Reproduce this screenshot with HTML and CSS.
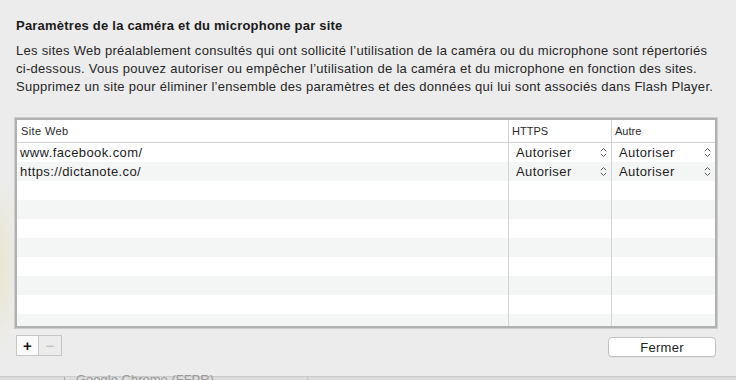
FILE: index.html
```html
<!DOCTYPE html>
<html lang="fr">
<head>
<meta charset="utf-8"/>
<title>Paramètres de la caméra et du microphone par site</title>
<link rel="stylesheet" href="styles.css">
</head>
<body>
<div class="sheet">
  <h1 class="title">Paramètres de la caméra et du microphone par site</h1>
  <p class="intro">Les sites Web préalablement consultés qui ont sollicité l’utilisation de la caméra ou du microphone sont répertoriés ci-dessous. Vous pouvez autoriser ou empêcher l’utilisation de la caméra et du microphone en fonction des sites. Supprimez un site pour éliminer l’ensemble des paramètres et des données qui lui sont associés dans Flash Player.</p>

  <div class="sites">
    <div class="row head">
      <div class="cell">Site Web</div>
      <div class="cell">HTTPS</div>
      <div class="cell">Autre</div>
    </div>
    <div class="row">
      <div class="cell">www.facebook.com/</div>
      <div class="cell pick">Autoriser <svg class="updown" width="7" height="11" viewBox="0 0 7 11"><path d="M0.8 4.2 L3.5 1.5 L6.2 4.2 M0.8 6.8 L3.5 9.5 L6.2 6.8"/></svg></div>
      <div class="cell pick">Autoriser <svg class="updown" width="7" height="11" viewBox="0 0 7 11"><path d="M0.8 4.2 L3.5 1.5 L6.2 4.2 M0.8 6.8 L3.5 9.5 L6.2 6.8"/></svg></div>
    </div>
    <div class="row">
      <div class="cell">https://dictanote.co/</div>
      <div class="cell pick">Autoriser <svg class="updown" width="7" height="11" viewBox="0 0 7 11"><path d="M0.8 4.2 L3.5 1.5 L6.2 4.2 M0.8 6.8 L3.5 9.5 L6.2 6.8"/></svg></div>
      <div class="cell pick">Autoriser <svg class="updown" width="7" height="11" viewBox="0 0 7 11"><path d="M0.8 4.2 L3.5 1.5 L6.2 4.2 M0.8 6.8 L3.5 9.5 L6.2 6.8"/></svg></div>
    </div>
    <div class="row"><div class="cell"></div><div class="cell"></div><div class="cell"></div></div>
    <div class="row"><div class="cell"></div><div class="cell"></div><div class="cell"></div></div>
    <div class="row"><div class="cell"></div><div class="cell"></div><div class="cell"></div></div>
    <div class="row"><div class="cell"></div><div class="cell"></div><div class="cell"></div></div>
    <div class="row"><div class="cell"></div><div class="cell"></div><div class="cell"></div></div>
    <div class="row"><div class="cell"></div><div class="cell"></div><div class="cell"></div></div>
    <div class="row"><div class="cell"></div><div class="cell"></div><div class="cell"></div></div>
    <div class="row"><div class="cell"></div><div class="cell"></div><div class="cell"></div></div>
  </div>

  <div class="actions">
    <div class="segment">
      <button class="seg add">+</button>
      <button class="seg remove" disabled>−</button>
    </div>
    <button class="close">Fermer</button>
  </div>
</div>

<div class="behind">
  <span class="behind-label">Google Chrome (FFPR)</span>
</div>
</body>
</html>
```

FILE: styles.css
```css
html, body { margin: 0; }
body {
  width: 736px; height: 380px; overflow: hidden; position: relative;
  font-family: "Liberation Sans", Arial, sans-serif; font-size: 13px; color: #1d1d1d;
  background: radial-gradient(ellipse 22px 90px at 0 265px, #e9e6cf, rgba(236,236,236,0) 100%), #ececec;
}
.sheet { padding: 17px 20px 0 16px; }
.title { margin: 0; font-size: 13px; line-height: 18px; font-weight: bold; color: #1a1a1a; letter-spacing: 0.22px; }
.intro { margin: 7px 0 0; line-height: 18px; color: #262626; letter-spacing: 0.28px; }

.sites {
  margin: 22px 0 0 -1px; width: 702px; height: 210px; box-sizing: border-box; overflow: hidden;
  border: 2px solid #b1b1b1; outline: 1px solid #cdcdcd; background: #fff;
}
.row { display: grid; grid-template-columns: 492px 103px 103px; height: 19px; line-height: 19px; letter-spacing: 0.4px; }
.row:nth-child(odd) { background: #f4f5f5; }
.row.head { height: 23px; line-height: 22px; background: #fff; border-bottom: 1px solid #d3d3d3; box-sizing: border-box; font-size: 11px; color: #2a2a2a; letter-spacing: 0; }
.cell { padding-left: 3px; border-right: 1px solid #d3d3d3; box-sizing: border-box; white-space: nowrap; overflow: hidden; }
.cell:last-child { border-right: none; }
.head .cell { padding-left: 4px; }
.head .cell:first-child { letter-spacing: 0.4px; }
.head .cell + .cell { padding-left: 3px; }
.pick { display: flex; justify-content: space-between; align-items: center; padding: 0 4px 0 7px; }
.updown { fill: none; stroke: #5a5a5a; stroke-width: 1; }

.actions { display: flex; justify-content: space-between; align-items: flex-start; margin-top: 7px; }
.segment { display: flex; }
.seg {
  width: 23px; height: 21px; margin: 0; padding: 0; box-sizing: border-box;
  border: 1px solid #c6c6c6; font-family: inherit; font-size: 15px; line-height: 18px;
}
.add { background: #fafafa; color: #111; font-weight: bold; }
.remove { border-left: none; background: #ececec; color: #b8b8b8; }
.close {
  margin-top: 2px; width: 108px; height: 20px; padding: 0; box-sizing: border-box;
  background: #fff; border: 1px solid #c2c2c2; border-radius: 4px;
  font-family: inherit; font-size: 13px; letter-spacing: 0.3px; color: #222; box-shadow: 0 1px 0 rgba(0,0,0,0.05);
}

.behind {
  position: absolute; left: 0; right: 0; top: 376px; height: 4px;
  background: #dcdcdc; border-top: 1px solid #cbcbcb;
  background-image: linear-gradient(#a9a9a9, #a9a9a9), linear-gradient(#c2c2c2, #c2c2c2);
  background-size: 1px 4px, 1px 4px; background-position: 64px 0, 307px 0; background-repeat: no-repeat;
}
.behind-label { position: absolute; left: 76px; top: -4px; font-size: 13px; line-height: 14px; color: #9a9a9a; }
```
